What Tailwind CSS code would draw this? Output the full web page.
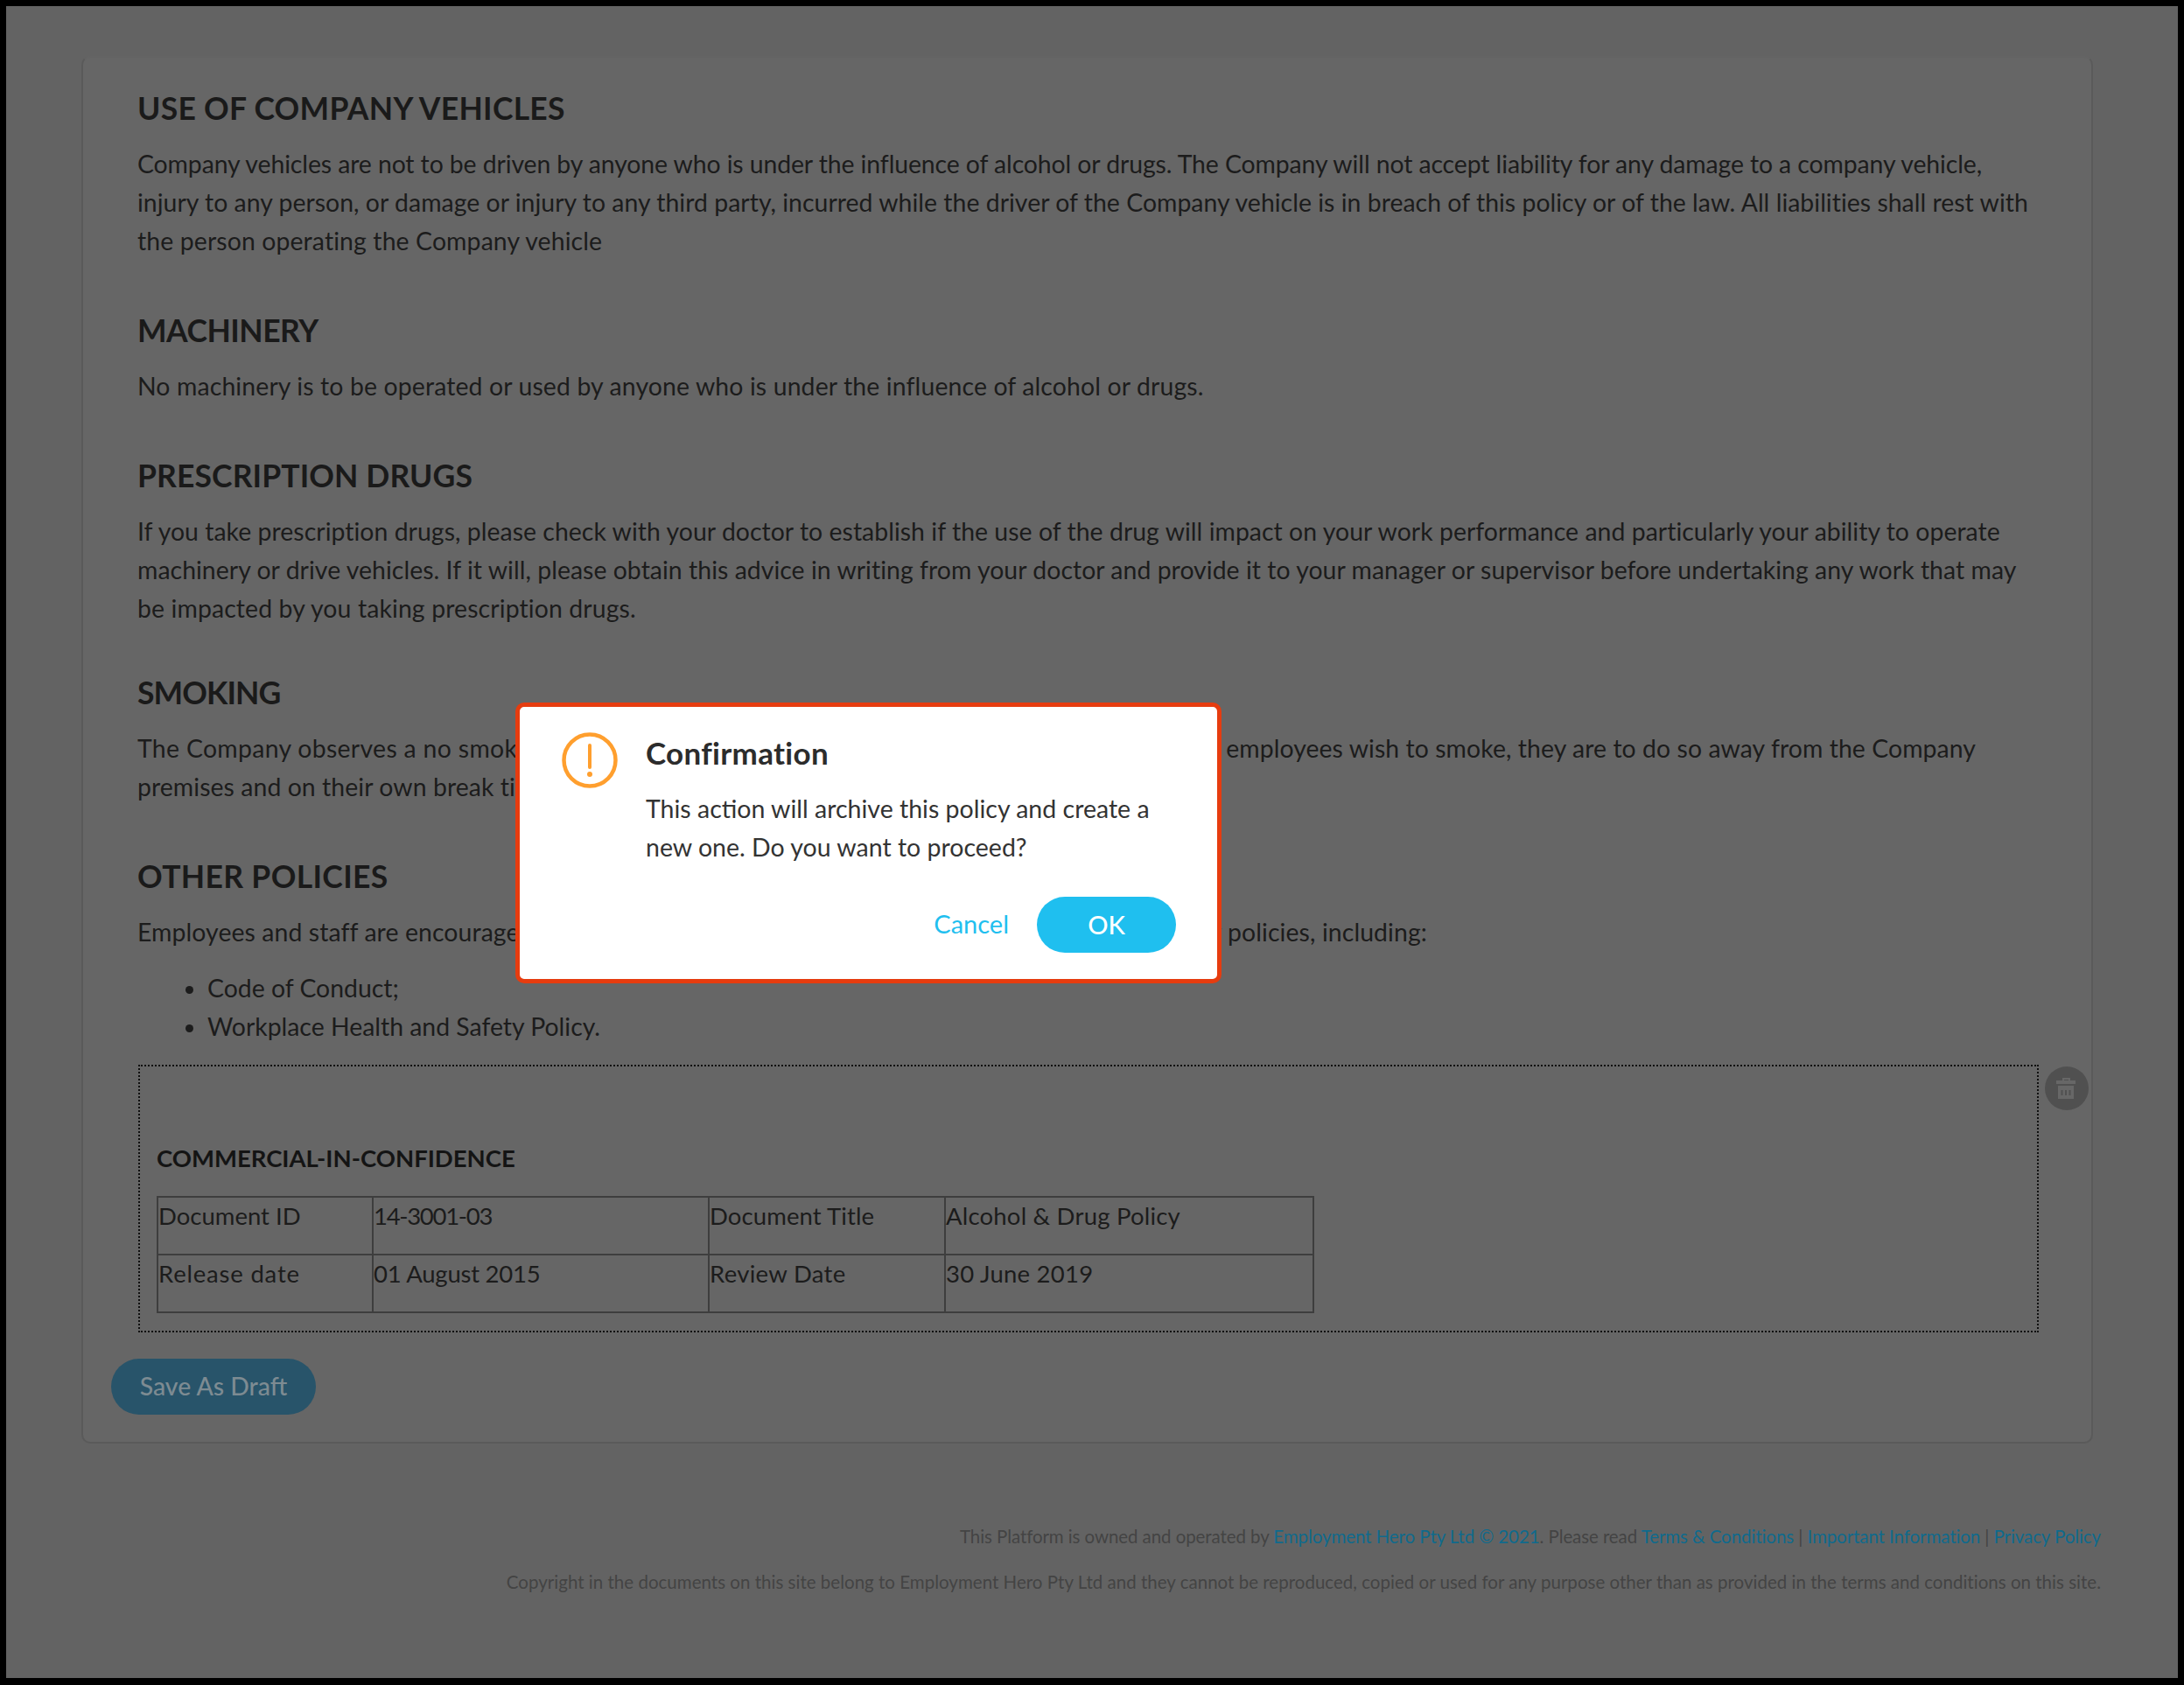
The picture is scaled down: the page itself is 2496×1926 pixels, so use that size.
<!DOCTYPE html>
<html lang="en">
<head>
<meta charset="utf-8">
<title>Policy</title>
<script src="https://cdn.jsdelivr.net/npm/@tailwindcss/browser@4"></script>
</head>
<body class="bg-black font-['Lato',sans-serif]">
    <div class="relative w-[2496px] h-[1926px] bg-black p-[7px] overflow-hidden">
        <div class="w-[2482px] h-[1911px] bg-[#636363] pt-[57px] pl-[86px] pr-[97px]">

            <!-- Policy card -->
            <div class="h-[1586px] bg-[#666666] border-2 border-[#5a5a5a] border-t-[#646464] rounded-[10px] pl-[62px] text-[28.4px] leading-[44px] text-[#1c1c1c]">
                <h2 class="mt-[36px] text-[35.5px] leading-[44px] font-bold tracking-[0.28px] text-[#1a1a1a]">USE OF COMPANY VEHICLES</h2>
                <p class="mt-[19px] tracking-[0.03px]"><span class="tracking-[-0.1px]">Company vehicles are not to be driven by anyone who is under the influence of alcohol or drugs. The Company will not accept liability for any damage to a company vehicle,</span><br>injury to any person, or damage or injury to any third party, incurred while the driver of the Company vehicle is in breach of this policy or of the law. All liabilities shall rest with<br><span class="tracking-[0.12px]">the person operating the Company vehicle</span></p>

                <h2 class="mt-[59px] text-[35.5px] leading-[44px] font-bold tracking-[-0.5px] text-[#1a1a1a]">MACHINERY</h2>
                <p class="mt-[19px] tracking-[0.13px]">No machinery is to be operated or used by anyone who is under the influence of alcohol or drugs.</p>

                <h2 class="mt-[59px] text-[35.5px] leading-[44px] font-bold tracking-[0.1px] text-[#1a1a1a]">PRESCRIPTION DRUGS</h2>
                <p class="mt-[19px] tracking-[0.04px]">If you take prescription drugs, please check with your doctor to establish if the use of the drug will impact on your work performance and particularly your ability to operate<br>machinery or drive vehicles. If it will, please obtain this advice in writing from your doctor and provide it to your manager or supervisor before undertaking any work that may<br><span class="tracking-[0.12px]">be impacted by you taking prescription drugs.</span></p>

                <h2 class="mt-[53px] text-[35.5px] leading-[44px] font-bold tracking-[-0.9px] text-[#1a1a1a]">SMOKING</h2>
                <p class="mt-[19px] tracking-[0.07px]"><span class="tracking-[0.32px]">The Company observes a no smok</span>ing policy in all Company buildings, premises and vehicles. When employees wish to smoke, they are to do so away from the Company<br>premises and on their own break time.</p>

                <h2 class="mt-[59px] text-[35.5px] leading-[44px] font-bold tracking-[0.34px] text-[#1a1a1a]">OTHER POLICIES</h2>
                <p class="mt-[19px] tracking-[0.095px]">Employees and staff are encouraged to read this Policy in conjunction with other relevant Company policies, including:</p>
                <ul class="mt-[20px] pl-[80px] list-disc">
                    <li>Code of Conduct;</li>
                    <li>Workplace Health and Safety Policy.</li>
                </ul>

                <!-- Signature block -->
                <div class="relative mt-[22px] ml-[1px] w-[2172px] h-[306px] border-2 border-dotted border-[#111111] pl-[19px] pt-[83px]">
                    <h3 class="text-[27.5px] leading-[44px] font-bold text-[#141414]">COMMERCIAL-IN-CONFIDENCE</h3>
                    <table class="mt-[21px] w-[1323px] table-fixed border-collapse border-2 border-[#3e3e3e] text-[27.5px] leading-[36px]">
                        <tr class="h-[66px]">
                            <td class="w-[246px] border-2 border-[#3e3e3e] align-top pt-[3px]">Document ID</td>
                            <td class="w-[384px] border-2 border-[#3e3e3e] align-top pt-[3px] tracking-[-1.3px]">14-3001-03</td>
                            <td class="w-[270px] border-2 border-[#3e3e3e] align-top pt-[3px] tracking-[0.1px]">Document Title</td>
                            <td class="border-2 border-[#3e3e3e] align-top pt-[3px] tracking-[0.2px]">Alcohol &amp; Drug Policy</td>
                        </tr>
                        <tr class="h-[66px]">
                            <td class="border-2 border-[#3e3e3e] align-top pt-[3px] tracking-[0.8px]">Release date</td>
                            <td class="border-2 border-[#3e3e3e] align-top pt-[3px] tracking-[-0.25px]">01 August 2015</td>
                            <td class="border-2 border-[#3e3e3e] align-top pt-[3px] tracking-[0.3px]">Review Date</td>
                            <td class="border-2 border-[#3e3e3e] align-top pt-[3px] tracking-[0.25px]">30 June 2019</td>
                        </tr>
                    </table>
                    <div class="absolute top-[0px] -right-[59px] w-[50px] h-[50px]">
                        <svg viewBox="0 0 50 50" class="w-full h-full">
                            <circle cx="25" cy="25" r="25" fill="#505050"/>
                            <path d="M13 16h7v-3h9v3h6v4H13z M22 16h5v-1h-5z" fill="#676767" fill-rule="evenodd"/>
                            <path d="M15 22h18v15H15z" fill="#676767"/>
                            <path d="M18.5 27h2v6h-2z M23 27h2v6h-2z M27.5 27h2v6h-2z" fill="#505050"/>
                        </svg>
                    </div>
                </div>

                <button class="block mt-[30px] -ml-[30px] w-[234px] h-[64px] pb-[2px] rounded-full bg-[#28546a] text-[#7d8b92] text-[28.4px] font-medium">Save As Draft</button>
            </div>

            <!-- Footer -->
            <div class="mt-[80px] -mr-[9px] text-right text-[20.5px] leading-[52px] text-[#444444]">
                <p class="tracking-[-0.085px]">This Platform is owned and operated by <a class="text-[#0f6a8c]">Employment Hero Pty Ltd © 2021</a>. Please read <a class="text-[#0f6a8c]">Terms &amp; Conditions</a> | <a class="text-[#0f6a8c]">Important Information</a> | <a class="text-[#0f6a8c]">Privacy Policy</a></p>
                <p class="tracking-[0.015px]">Copyright in the documents on this site belong to Employment Hero Pty Ltd and they cannot be reproduced, copied or used for any purpose other than as provided in the terms and conditions on this site.</p>
            </div>
        </div>

        <!-- Confirmation modal -->
        <div class="absolute left-[589px] top-[803px] w-[807px] h-[321px] bg-white border-[5px] border-[#e63c0f] rounded-[10px] flex pl-[48px] pr-[47px]">
            <svg viewBox="0 0 64 64" class="w-[64px] h-[64px] mt-[29px] shrink-0">
                <circle cx="32" cy="32" r="29.5" fill="none" stroke="#ff9f2e" stroke-width="4.5"/>
                <path d="M32 15v25" stroke="#ff9f2e" stroke-width="4" stroke-linecap="round"/>
                <circle cx="32" cy="48" r="3" fill="#ff9f2e"/>
            </svg>
            <div class="ml-[32px] flex-1 pt-[32px]">
                <h3 class="text-[35px] leading-[40px] font-bold tracking-[0.3px] text-[#2c2c2c]">Confirmation</h3>
                <p class="mt-[22px] text-[28.5px] leading-[44px] text-[#333333]">This action will archive this policy and create a<br>new one. Do you want to proceed?</p>
                <div class="mt-[35px] flex justify-end items-center gap-[32px] text-[29px]">
                    <a class="text-[#1fbfef] -mt-[2px]">Cancel</a>
                    <button class="w-[159px] h-[64px] rounded-full bg-[#1fbfef] text-white font-medium">OK</button>
                </div>
            </div>
        </div>
    </div>
</body>
</html>
